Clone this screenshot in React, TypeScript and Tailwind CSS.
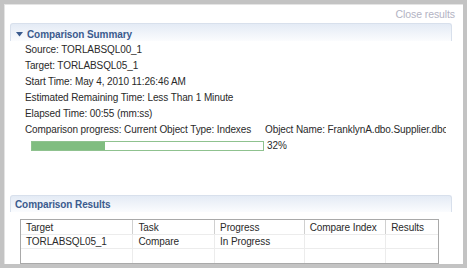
import React from "react";

const font = { fontFamily: '"Liberation Sans", Arial, sans-serif' };

export default function App() {
  const cols = [
    { name: "Target", w: 113 },
    { name: "Task", w: 82 },
    { name: "Progress", w: 90 },
    { name: "Compare Index", w: 82 },
    { name: "Results", w: 52 },
  ];
  const row1 = ["TORLABSQL05_1", "Compare", "In Progress", "", ""];
  return (
    <div className="w-[467px] h-[268px] bg-[#c3c3c3] p-[4px] overflow-hidden" style={font}>
      <div className="w-[459px] h-[260px] bg-white flex flex-col overflow-hidden shadow-[inset_1px_1px_0_#e4e4e4] tracking-[-0.1px]">
        <div className="h-[26px] flex items-start justify-end pr-[8px] pt-[4px] text-[10.5px] leading-[12px] text-[#b3b3c3]">
          Close results
        </div>
        <div className="ml-[6px] w-[442px] flex flex-col">
          <div className="h-[18px] flex items-center pt-[3px] rounded-t-[3px] border border-b-0 border-[#d8e0ec] bg-gradient-to-b from-[#e4ebf5] to-[#fbfcfe] pl-[5px]">
            <svg width="7" height="5" viewBox="0 0 7 5" className="mr-[4px]">
              <path d="M0 0 L7 0 L3.5 4.5 Z" fill="#3b5b8e" />
            </svg>
            <span className="text-[10px] font-bold text-[#3b5b8e]">Comparison Summary</span>
          </div>
          <div className="pl-[15px] pt-[1px] text-[10px] leading-[16px] text-[#2a2a2a] overflow-hidden">
            <div>Source: TORLABSQL00_1</div>
            <div>Target: TORLABSQL05_1</div>
            <div>Start Time: May 4, 2010 11:26:46 AM</div>
            <div>Estimated Remaining Time: Less Than 1 Minute</div>
            <div>Elapsed Time: 00:55 (mm:ss)</div>
            <div className="flex whitespace-nowrap">
              <span className="w-[240px] shrink-0">Comparison progress: Current Object Type: Indexes</span>
              <span className="w-[181px] overflow-hidden">Object Name: FranklynA.dbo.Supplier.dbo</span>
            </div>
            <div className="flex items-center mt-[3px] ml-[6px]">
              <div className="w-[233px] h-[10px] border border-[#8fc28f] bg-white">
                <div className="h-full w-[73px] bg-[#80bd80]" />
              </div>
              <span className="ml-[3px] leading-[10px]">32%</span>
            </div>
          </div>
          <div className="mt-[44px] h-[17px] flex items-center pt-[1px] rounded-t-[3px] border border-b-0 border-[#d8e0ec] bg-gradient-to-b from-[#e4ebf5] to-[#fbfcfe] pl-[4px]">
            <span className="text-[10px] font-bold text-[#3b5b8e]">Comparison Results</span>
          </div>
          <div className="ml-[10px] mt-[7px] w-[419px] border border-[#a9a9a9] text-[10px] text-[#2a2a2a]">
            <div className="flex h-[15px] border-b border-[#ececec]">
              {cols.map((c, i) => (
                <div
                  key={c.name}
                  className={`flex items-center pl-[5px] ${i < cols.length - 1 ? "border-r border-[#d0d0d0]" : ""}`}
                  style={{ width: c.w }}
                >
                  {c.name}
                </div>
              ))}
            </div>
            <div className="flex h-[14px] border-b border-[#ececec]">
              {cols.map((c, i) => (
                <div
                  key={c.name}
                  className={`flex items-center pl-[5px] ${i < cols.length - 1 ? "border-r border-[#ececec]" : ""}`}
                  style={{ width: c.w }}
                >
                  {row1[i]}
                </div>
              ))}
            </div>
            <div className="flex h-[14px]">
              {cols.map((c, i) => (
                <div
                  key={c.name}
                  className={`${i < cols.length - 1 ? "border-r border-[#ececec]" : ""}`}
                  style={{ width: c.w }}
                />
              ))}
            </div>
          </div>
        </div>
      </div>
    </div>
  );
}
